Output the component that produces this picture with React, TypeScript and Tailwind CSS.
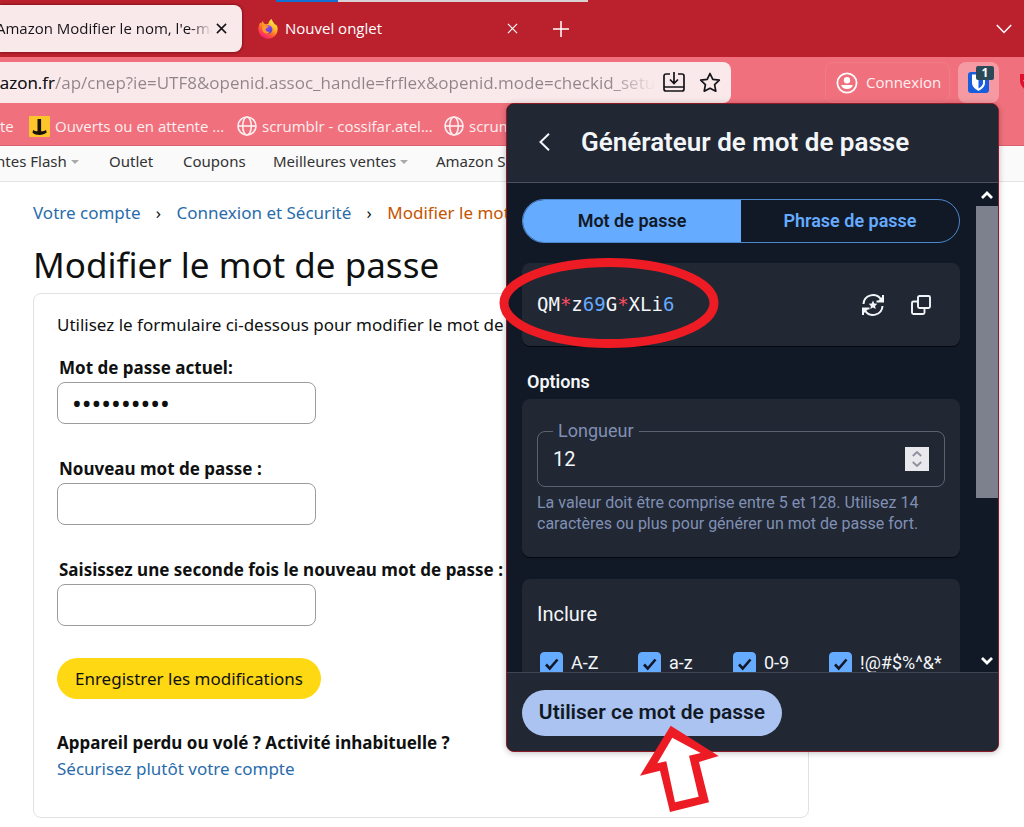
import React, { useState } from "react";

const UI = "font-['Open_Sans','Noto_Sans',sans-serif]";
const SHOP = "font-['Noto_Sans',sans-serif]";

function CloseIcon({ className }: { className: string }) {
  return (
    <svg viewBox="0 0 12 12" className={className} fill="none" stroke="currentColor" aria-hidden="true">
      <path d="M1 1l10 10M11 1L1 11" />
    </svg>
  );
}

function GlobeIcon() {
  return (
    <svg viewBox="0 0 20 20" className="size-5 shrink-0" fill="none" stroke="currentColor" strokeWidth="1.6" aria-hidden="true">
      <circle cx="10" cy="10" r="9" />
      <ellipse cx="10" cy="10" rx="4.3" ry="9" />
      <path d="M1 10h18" />
    </svg>
  );
}

function FirefoxIcon() {
  return (
    <svg viewBox="0 0 20 20" className="size-5 shrink-0" aria-hidden="true">
      <defs>
        <linearGradient id="fx-body" x1="0.85" y1="0.05" x2="0.25" y2="1">
          <stop offset="0" stopColor="#fff44f" />
          <stop offset="0.35" stopColor="#ffb62a" />
          <stop offset="0.6" stopColor="#ff6a2b" />
          <stop offset="0.85" stopColor="#ff2f5e" />
          <stop offset="1" stopColor="#e31587" />
        </linearGradient>
        <linearGradient id="fx-globe" x1="0.3" y1="0" x2="0.7" y2="1">
          <stop offset="0" stopColor="#a84bff" />
          <stop offset="1" stopColor="#4a3fc4" />
        </linearGradient>
      </defs>
      <path
        fill="url(#fx-body)"
        d="M19.2 7.6c-.4-1-1.3-2.1-2-2.5.1.6.2 1 .2 1.400C16.200 3.700 14.300 2.800 13.600 0c-2 1.200-3 3.200-3.200 4.700-.9.1-1.700.3-2.400.7L5.600 4.300 5 2 3.100 4.500l-.6-.9C1.300 5 .9 6.300.8 7.200.4 8 .3 9.200.3 10.200a9.700 9.700 0 0 0 19.400 0c0-1-.2-1.800-.5-2.600z"
      />
      <circle cx="10.200" cy="10.400" r="4.200" fill="url(#fx-globe)" />
      <path
        fill="#ff9a2b"
        d="M4.600 6.700c1.500-.5 2.700-.2 3.500.4l2.600.3c-.2 1-1.500 1.100-2.300 1.800-.5.5-.5 1.100-1.100 1.400.7 2 2.500 2.600 4.500 1.800-.9 2-3.600 2.700-5.600 1.400-2-1.400-2.500-4.700-1.600-7.100z"
      />
    </svg>
  );
}

function SaveIcon() {
  return (
    <svg viewBox="0 0 22 21" className="h-[21px] w-[22px]" fill="none" stroke="currentColor" strokeWidth="1.700" aria-hidden="true">
      <path d="M7 2H3a2 2 0 0 0-2 2v13a2 2 0 0 0 2 2h16a2 2 0 0 0 2-2V4a2 2 0 0 0-2-2h-4M1.500 15h19M11 0v11M7 7.500l4 4 4-4" />
    </svg>
  );
}

function StarIcon() {
  return (
    <svg viewBox="0 0 22 22" className="size-[22px]" fill="none" stroke="currentColor" strokeWidth="1.700" strokeLinejoin="round" aria-hidden="true">
      <path d="M11 1.500l2.800 5.900 6.500.8-4.700 4.500 1.200 6.500L11 16.200l-5.800 3 1.200-6.500L1.700 8.200l6.500-.8z" />
    </svg>
  );
}

function TabStrip() {
  return (
    <div className="relative flex h-[57px] items-center bg-[#bb202d] text-white">
      <div className="absolute top-0 left-[276px] flex h-0.5">
        <span className="w-[62px] bg-[#1170d2]" />
        <span className="w-[250px] bg-[#d9d2d4]" />
      </div>
      <div className="flex h-[47px] w-[242px] shrink-0 items-center justify-between rounded-r-lg bg-[#fae9eb] pr-[15px] text-[#15141a] shadow-[0_0_3px_rgba(60,0,0,0.8)]">
        <span className="-ml-1 w-[216px] overflow-hidden bg-linear-to-r from-[#15141a] from-90% to-transparent bg-clip-text text-[15px] whitespace-nowrap text-transparent">
          Amazon Modifier le nom, l'e-mail
        </span>
        <button type="button" aria-label="Fermer l'onglet" className="shrink-0">
          <CloseIcon className="size-[11px] stroke-[1.700]" />
        </button>
      </div>
      <div className="ml-4 flex items-center">
        <FirefoxIcon />
        <span className="ml-[7px] w-[222px] text-[15px]">Nouvel onglet</span>
        <button type="button" aria-label="Fermer l'onglet">
          <CloseIcon className="size-[11px] stroke-[1.300]" />
        </button>
      </div>
      <button type="button" aria-label="Ouvrir un nouvel onglet" className="ml-[35px]">
        <svg viewBox="0 0 16 16" className="size-4" fill="none" stroke="currentColor" strokeWidth="1.500" aria-hidden="true">
          <path d="M8 0v16M0 8h16" />
        </svg>
      </button>
      <button type="button" aria-label="Lister tous les onglets" className="mr-3 ml-auto">
        <svg viewBox="0 0 16 10" className="h-2.5 w-4" fill="none" stroke="currentColor" strokeWidth="1.500" aria-hidden="true">
          <path d="M.8 1l7.200 7.500L15.200 1" />
        </svg>
      </button>
    </div>
  );
}

function Toolbar() {
  return (
    <div className="flex h-[46px] items-center overflow-hidden pt-[5px] text-white">
      <div className="flex h-[41px] w-[731px] shrink-0 items-center rounded-r-lg bg-[#fae9eb] pr-2.5 text-[#15141a]">
        <div className="-ml-4 w-[672px] shrink-0 overflow-hidden bg-linear-to-r from-[#8f8589] from-93% to-transparent bg-clip-text text-[17px] whitespace-nowrap text-transparent">
          <span className="text-[#15141a]">mazon.fr</span>
          /ap/cnep?ie=UTF8&amp;openid.assoc_handle=frflex&amp;openid.mode=checkid_setup
        </div>
        <button type="button" aria-label="Installer la page" className="ml-[7px]">
          <SaveIcon />
        </button>
        <button type="button" aria-label="Marquer cette page" className="ml-3.5">
          <StarIcon />
        </button>
      </div>
      <button type="button" className="ml-[94px] flex h-[41px] w-[125px] shrink-0 items-center gap-2 rounded-lg border border-[#f07c86] pl-2.5">
        <svg viewBox="0 0 22 22" className="size-[22px] shrink-0" aria-hidden="true">
          <circle cx="11" cy="11" r="9.600" fill="none" stroke="currentColor" strokeWidth="1.800" />
          <circle cx="11" cy="8.200" r="3.200" fill="currentColor" />
          <path d="M5.200 13h11.600c-.4 2.500-2.800 4.100-5.800 4.100S5.600 15.500 5.200 13z" fill="currentColor" />
        </svg>
        <span className="text-[15px] text-[#fdeff0]">Connexion</span>
      </button>
      <button type="button" aria-label="Bitwarden" className="relative ml-2 flex size-[41px] shrink-0 items-center justify-center rounded-lg bg-[#f59aa3]">
        <svg viewBox="0 0 21 21" className="size-[21px]" aria-hidden="true">
          <rect width="21" height="21" rx="3" fill="#175ddc" />
          <path d="M4 2.500h13v8.200c0 4-3.500 6.600-6.500 8.300C7.500 17.300 4 14.700 4 10.700z" fill="#fff" />
          <path d="M10.500 5H15v6c0 2.300-2 4-4.500 5.500z" fill="#175ddc" />
        </svg>
        <span className="absolute top-1 right-[5px] flex h-3.5 w-[18px] items-center justify-center rounded-xs bg-[#2a4a5a] text-xs font-bold">1</span>
      </button>
      <svg viewBox="0 0 20 20" className="ml-5 size-5 shrink-0" aria-hidden="true">
        <path d="M1 1h18v7a9 9 0 0 1-18 0z" fill="#e0102c" />
        <path d="M5 7l5 5 5-5" fill="none" stroke="#fff" strokeWidth="2" />
      </svg>
    </div>
  );
}

function Bookmarks() {
  return (
    <div className="flex h-[43px] items-center border-b border-[#d95f6b] pt-1 text-[15px] whitespace-nowrap text-[#fdeff0]">
      <a href="#te" className="w-[29px] shrink-0">te</a>
      <a href="#tickets" className="flex w-[208px] shrink-0 items-center gap-[5px]">
        <svg viewBox="0 0 21 21" className="size-[21px] shrink-0" aria-hidden="true">
          <rect width="21" height="21" rx="1" fill="#fcc52c" />
          <path d="M8.500 3h3.600v12.300c2.200 0 3.700-.5 4.900-1.400l.7 2.700c-2 1.700-4.200 2.400-7.200 2.400s-5-.6-7-2.200l.6-2.900c1.300.9 2.500 1.300 4.400 1.400z" fill="#17120a" />
        </svg>
        Ouverts ou en attente ...
      </a>
      <a href="#atelier" className="flex w-[207px] shrink-0 items-center gap-[5px]">
        <GlobeIcon />
        scrumblr - cossifar.atel...
      </a>
      <a href="#scrumblr" className="flex shrink-0 items-center gap-[5px]">
        <GlobeIcon />
        scrumblr
      </a>
    </div>
  );
}

function Caret() {
  return <span className="mb-0.5 ml-1 inline-block border-x-4 border-t-4 border-x-transparent border-t-[#aaa] align-middle" />;
}

function ShopNav() {
  return (
    <nav className={`${SHOP} flex h-9 items-center overflow-hidden border-b border-[#e4e4e4] bg-[#fafafa] pb-1 text-[15px] whitespace-nowrap text-[#333]`}>
      <a href="#flash" className="-ml-1 w-[113px] shrink-0">ntes Flash<Caret /></a>
      <a href="#outlet" className="w-[74px] shrink-0">Outlet</a>
      <a href="#coupons" className="w-[90px] shrink-0">Coupons</a>
      <a href="#ventes" className="w-[163px] shrink-0">Meilleures ventes<Caret /></a>
      <a href="#suivis" className="shrink-0">Amazon Suivis</a>
    </nav>
  );
}

function Field({ id, label, value }: { id: string; label: string; value?: string }) {
  return (
    <div className="mb-[31px]">
      <label htmlFor={id} className="ml-0.5 block text-[17px] leading-7 font-bold whitespace-nowrap">
        {label}
      </label>
      <input
        id={id}
        type="password"
        defaultValue={value}
        className="block h-[42px] w-[259px] rounded-lg border border-[#9a9d9d] px-3.5 text-[26px] outline-none"
      />
    </div>
  );
}

function ShopPage() {
  return (
    <main className={`${SHOP} mx-[33px] pt-[15px] text-[#0f1111]`}>
      <nav className="flex h-8 items-center text-[17px] whitespace-nowrap">
        <a href="#compte" className="text-[#2a6cab]">Votre compte</a>
        <span className="w-9 text-center">›</span>
        <a href="#securite" className="text-[#2a6cab]">Connexion et Sécurité</a>
        <span className="w-9 text-center">›</span>
        <span className="text-[#c45500]">Modifier le mot de passe</span>
      </nav>
      <h1 className="mt-[11px] h-[53px] text-[35px] leading-[50px] whitespace-nowrap">Modifier le mot de passe</h1>
      <section className="h-[525px] max-w-[776px] rounded-lg border border-[#dfe2e2] px-[23px] pt-[18px]">
        <p className="mb-4 text-[17px] leading-[26px] whitespace-nowrap">Utilisez le formulaire ci-dessous pour modifier le mot de passe.</p>
        <Field id="actuel" label="Mot de passe actuel:" value="motdepasse" />
        <Field id="nouveau" label="Nouveau mot de passe :" />
        <Field id="confirme" label="Saisissez une seconde fois le nouveau mot de passe :" />
        <button type="button" className="mt-px h-[41px] w-[264px] rounded-full bg-[#ffd814] text-[17px] whitespace-nowrap">
          Enregistrer les modifications
        </button>
        <p className="mt-[31px] text-[17px] leading-[26px] font-bold">Appareil perdu ou volé ? Activité inhabituelle ?</p>
        <a href="#securiser" className="block text-[17px] leading-[26px] text-[#2a6cab]">Sécurisez plutôt votre compte</a>
      </section>
    </main>
  );
}

const PASSWORD = "QM*z69G*XLi6";

function runColor(run: string) {
  if (/^\d/.test(run)) return "text-[#65abff]";
  if (/^[a-z]/i.test(run)) return "text-[#f3f6f9]";
  return "text-[#ff4e63]";
}

function Check({ label, className }: { label: string; className: string }) {
  const [on, setOn] = useState(true);
  return (
    <label className={`flex items-center gap-2 text-lg leading-6 ${className}`}>
      <span className="relative size-[23px] shrink-0">
        <input
          type="checkbox"
          checked={on}
          onChange={() => setOn(!on)}
          className="block size-full appearance-none rounded border border-[#65abff] checked:bg-[#65abff]"
        />
        {on && (
          <svg viewBox="0 0 23 23" className="pointer-events-none absolute inset-0" fill="none" stroke="#121926" strokeWidth="2.600" aria-hidden="true">
            <path d="M6 12.500l3.700 4L17.500 7.500" />
          </svg>
        )}
      </span>
      {label}
    </label>
  );
}

function ScrollArrow({ d, label }: { d: string; label: string }) {
  return (
    <button type="button" aria-label={label} className="flex h-[23px] w-full items-center justify-center text-white">
      <svg viewBox="0 0 12 8" className="h-2 w-3" fill="none" stroke="currentColor" strokeWidth="2.800" aria-hidden="true">
        <path d={d} />
      </svg>
    </button>
  );
}

function Generator() {
  const card = "rounded-lg bg-[#212733] px-[15px] shadow-[0_1px_0_#05080e]";
  return (
    <aside className="absolute top-[103px] right-[25px] w-[493px] overflow-hidden rounded-lg border border-[#8e1a28] bg-[#121926] font-[Roboto,sans-serif] text-[#f3f6f9] shadow-[0_1px_6px_rgba(0,0,0,0.25)]">
      <header className="flex h-[79px] items-center border-b border-[#4a505d] bg-[#212733] pb-0.5 pl-8">
        <button type="button" aria-label="Retour" className="w-[42px]">
          <svg viewBox="0 0 11 18" className="h-[18px] w-[11px]" fill="none" stroke="currentColor" strokeWidth="2" aria-hidden="true">
            <path d="M10 .8L1.500 9l8.500 8.200" />
          </svg>
        </button>
        <h2 className="text-[26px] leading-8 font-semibold whitespace-nowrap">Générateur de mot de passe</h2>
      </header>

      <div className="flex h-[489px] overflow-hidden">
        <div className="min-w-0 flex-1 px-[15px] pt-4">
          <div className="flex h-11 overflow-hidden rounded-full border border-[#4c87cf] text-lg font-semibold">
            <button type="button" className="flex-1 bg-[#65abff] text-[#121926]">Mot de passe</button>
            <button type="button" className="flex-1 text-[#65abff]">Phrase de passe</button>
          </div>

          <div className={`${card} mt-5 flex h-[83px] items-center`}>
            <output className="flex-1 font-['DejaVu_Sans_Mono',monospace] text-[19px]">
              {PASSWORD.match(/\d+|[a-z]+|[^a-z\d]+/gi)?.map((run, i) => (
                <span key={i} className={runColor(run)}>{run}</span>
              ))}
            </output>
            <button type="button" aria-label="Générer un mot de passe" className="mr-[27px]">
              <svg viewBox="0 0 22 22" className="size-[22px]" fill="none" stroke="currentColor" strokeWidth="2" aria-hidden="true">
                <path d="M1.500 10a9.500 9.500 0 0 1 17.500-4.500M20.500 12A9.500 9.500 0 0 1 3 16.500" />
                <path d="M21 1v6.500h-6.500M1 21v-6.500h6.500" />
                <path d="M20.500 2.500v5h-5zM1.500 19.500v-5h5z" fill="currentColor" stroke="none" />
                <path d="M11 6.600l1.300 2.800 3 .4-2.200 2.100.6 3-2.700-1.500-2.700 1.500.6-3-2.200-2.100 3-.4z" fill="currentColor" stroke="none" />
              </svg>
            </button>
            <button type="button" aria-label="Copier le mot de passe" className="mr-3.5">
              <svg viewBox="0 0 20 20" className="size-5" fill="none" stroke="currentColor" strokeWidth="1.900" aria-hidden="true">
                <rect x="7" y="1" width="12" height="12" rx="1.500" />
                <path d="M7 6.500H2.500A1.500 1.500 0 0 0 1 8v9.500A1.500 1.500 0 0 0 2.500 19H12a1.500 1.500 0 0 0 1.500-1.500V13" />
              </svg>
            </button>
          </div>

          <h3 className="mt-6 ml-[5px] text-lg leading-6 font-semibold">Options</h3>

          <div className={`${card} mt-[5px] h-[158px] pt-[21px]`}>
            <fieldset className="flex h-[67px] items-center rounded-lg border border-[#5c6370] px-[15px] pb-2.5">
              <legend className="h-[22px] px-[5px] text-lg leading-[22px] text-[#8090b4]">
                <label htmlFor="longueur">Longueur</label>
              </legend>
              <input
                id="longueur"
                type="number"
                defaultValue={12}
                min={5}
                max={128}
                className="min-w-0 flex-1 appearance-none bg-transparent text-xl outline-none [-moz-appearance:textfield] [&::-webkit-inner-spin-button]:appearance-none"
              />
              <span className="flex h-6 w-6 items-center justify-center bg-[#e9e9ed] text-[#8f8f9d]">
                <svg viewBox="0 0 10 16" className="h-4 w-2.5" fill="none" stroke="currentColor" strokeWidth="1.800" aria-hidden="true">
                  <path d="M.8 5L5 1l4.200 4M.8 11L5 15l4.200-4" />
                </svg>
              </span>
            </fieldset>
            <p className="mt-[5px] text-base leading-[21px] text-[#8090b4]">
              La valeur doit être comprise entre 5 et 128. Utilisez 14 caractères ou plus pour générer un mot de passe fort.
            </p>
          </div>

          <div className={`${card} mt-[22px] h-[158px] pt-[22px]`}>
            <h4 className="text-xl leading-[26px]">Inclure</h4>
            <div className="mt-6 ml-[3px] flex whitespace-nowrap">
              <Check label="A-Z" className="w-[98px]" />
              <Check label="a-z" className="w-[95px]" />
              <Check label="0-9" className="w-24" />
              <Check label="!@#$%^&*" className="" />
            </div>
          </div>
        </div>
        <div className="flex w-[23px] shrink-0 flex-col">
          <ScrollArrow d="M1 7l5-5 5 5" label="Défiler vers le haut" />
          <div className="ml-px h-[292px] bg-[#7c818d]" />
          <div className="mt-auto">
            <ScrollArrow d="M1 1l5 5 5-5" label="Défiler vers le bas" />
          </div>
        </div>
      </div>

      <footer className="flex h-[79px] items-center border-t border-[#3f4552] bg-[#212733] px-[15px] pt-px">
        <button type="button" className="h-[46px] w-[260px] rounded-full bg-[#aac3f0] text-[21px] font-semibold whitespace-nowrap text-[#121926]">
          Utiliser ce mot de passe
        </button>
      </footer>
    </aside>
  );
}

export default function App() {
  return (
    <div className={`${UI} relative min-h-screen overflow-hidden bg-white`}>
      <div className="bg-[#f0717d]">
        <TabStrip />
        <Toolbar />
        <Bookmarks />
      </div>
      <ShopNav />
      <ShopPage />
      <Generator />
      <svg viewBox="0 0 220 92" className="pointer-events-none absolute top-[257px] right-[305px] h-[92px] w-[220px]" fill="none" aria-hidden="true">
        <ellipse cx="110" cy="46" rx="105" ry="40.500" stroke="#ed1c24" strokeWidth="9" />
      </svg>
      <svg viewBox="0 0 80 88" className="pointer-events-none absolute top-[725px] right-[304px] h-[88px] w-20" aria-hidden="true">
        <path d="M30.700.7L78.700 31l-19.700 6 10 40.300L30 87l-10-41.300L0 50.700z" fill="#ed1c24" />
        <path d="M32.300 12.700L60.700 28 49 30.700l9.700 41L35 77.300l-8.700-41-9 2z" fill="#fff" />
      </svg>
    </div>
  );
}
